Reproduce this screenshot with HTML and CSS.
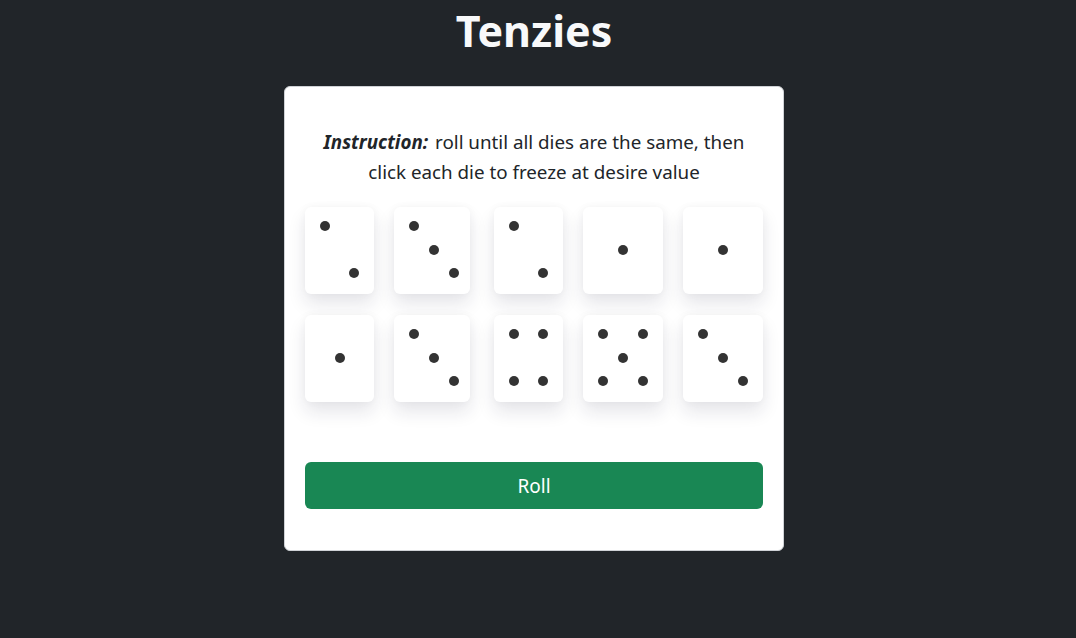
FILE: index.html
```html
<!DOCTYPE html>
<html lang="en">
<head>
<meta charset="utf-8">
<title>Tenzies</title>
<link rel="stylesheet" href="styles.css">
</head>
<body>
<main class="page">
  <h1 class="title">Tenzies</h1>
  <section class="card">
    <p class="instruction"><strong><em>Instruction:</em></strong> roll until all dies are the same, then click each die to freeze at desire value</p>
    <div class="dice">
      <div class="die"><div class="dots"><span class="dot p1"></span><span class="dot p9"></span></div></div>
      <div class="die"><div class="dots"><span class="dot p1"></span><span class="dot p5"></span><span class="dot p9"></span></div></div>
      <div class="die"><div class="dots"><span class="dot p1"></span><span class="dot p9"></span></div></div>
      <div class="die"><div class="dots"><span class="dot p5"></span></div></div>
      <div class="die"><div class="dots"><span class="dot p5"></span></div></div>
      <div class="die"><div class="dots"><span class="dot p5"></span></div></div>
      <div class="die"><div class="dots"><span class="dot p1"></span><span class="dot p5"></span><span class="dot p9"></span></div></div>
      <div class="die"><div class="dots"><span class="dot p1"></span><span class="dot p3"></span><span class="dot p7"></span><span class="dot p9"></span></div></div>
      <div class="die"><div class="dots"><span class="dot p1"></span><span class="dot p3"></span><span class="dot p5"></span><span class="dot p7"></span><span class="dot p9"></span></div></div>
      <div class="die"><div class="dots"><span class="dot p1"></span><span class="dot p5"></span><span class="dot p9"></span></div></div>
    </div>
    <button class="roll" type="button">Roll</button>
  </section>
</main>
</body>
</html>
```
FILE: styles.css
```css
* { box-sizing: border-box; }

html, body {
  margin: 0;
  padding: 0;
}

body {
  background: #212529;
  font-family: "Noto Sans", "Open Sans", sans-serif;
  color: #212529;
}

.page {
  display: flex;
  flex-direction: column;
  align-items: center;
  padding-right: 8px;
}

.title {
  margin: 0;
  padding-top: 3px;
  font-size: 43px;
  line-height: 56px;
  font-weight: 700;
  color: #f8f9fa;
}

.card {
  margin-top: 27px;
  width: 500px;
  background: #fff;
  border: 1px solid #cfd2d6;
  border-radius: 6px;
  padding: 40px 20px 41px;
}

.instruction {
  margin: 0 auto;
  width: 440px;
  text-align: center;
  font-size: 18.8px;
  line-height: 30px;
  color: #212529;
}

.instruction strong {
  font-weight: 700;
  display: inline-block;
  padding-right: 2px;
}

.dice {
  margin-top: 20px;
  display: grid;
  grid-template-columns: 69px 80px 69px 80px 80px;
  column-gap: 20px;
  row-gap: 21px;
}

.die {
  height: 87px;
  background: #fff;
  border-radius: 6px;
  box-shadow: 0 10px 18px rgba(30, 30, 60, 0.11), 0 0 8px rgba(30, 30, 60, 0.04);
  padding: 14px 15px 16px;
}

.dice > .die:nth-child(5n+2) {
  width: 76px;
  padding-right: 11px;
}

.dots {
  height: 100%;
  display: grid;
  grid-template-columns: repeat(3, 10px);
  grid-template-rows: repeat(3, 10px);
  justify-content: space-between;
  align-content: space-between;
}

.dot {
  width: 10px;
  height: 10px;
  border-radius: 50%;
  background: #333;
}

.p1 { grid-area: 1 / 1; }
.p3 { grid-area: 1 / 3; }
.p5 { grid-area: 2 / 2; }
.p7 { grid-area: 3 / 1; }
.p9 { grid-area: 3 / 3; }

.roll {
  display: block;
  width: 100%;
  margin-top: 60px;
  height: 47px;
  border: none;
  border-radius: 6px;
  background: #198754;
  color: #fff;
  font-family: "Noto Sans", "Open Sans", sans-serif;
  font-size: 19px;
}
```
